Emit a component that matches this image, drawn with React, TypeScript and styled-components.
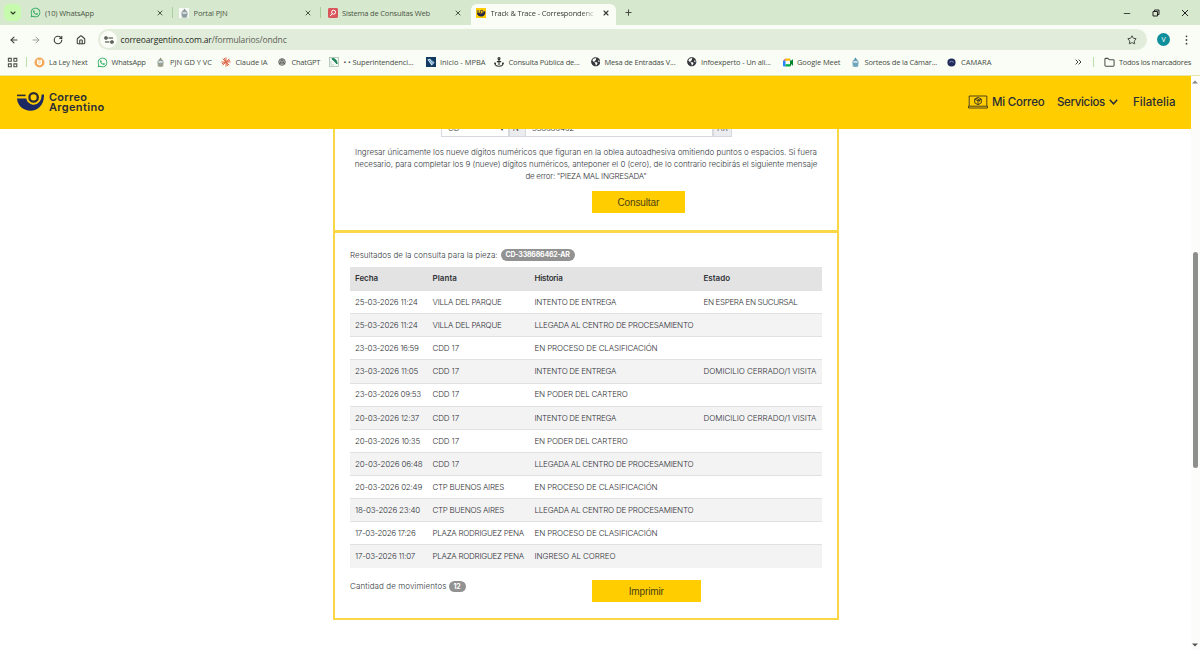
import React from 'react';
import styled, { createGlobalStyle } from 'styled-components';
import { ArrowLeft, ArrowRight, ChevronDown, Folder, Home, Plus, RotateCw, Star, X } from 'lucide-react';
import { FaWhatsapp, FaGlobeAmericas } from 'react-icons/fa';

const UI = '"Open Sans", "Noto Sans", sans-serif';
const PAGE = '"Inter", "Liberation Sans", sans-serif';
const YELLOW = '#ffcd00';
const LINE = '#f9d745';

const GlobalStyle = createGlobalStyle`
  * { box-sizing: border-box; }
  body { margin: 0; background: #fff; overflow: hidden; }
  svg { display: block; flex: none; }
`;

const Window = styled.div`
  width: 1200px;
  height: 650px;
  display: flex;
  flex-direction: column;
  overflow: hidden;
  font-family: ${UI};
  color: #474c45;
`;

const Label = styled.span<{ $ls?: number }>`
  letter-spacing: ${p => p.$ls ?? -0.15}px;
  white-space: nowrap;
`;

/* ---------- Tab strip ---------- */

const TabStrip = styled.div`
  height: 25px;
  flex: none;
  display: flex;
  align-items: center;
  background: #d6e8cd;
  padding: 0 11px 0 4px;
  font-size: 7.5px;
`;

const TabSearch = styled.div`
  width: 17px;
  height: 17px;
  margin-right: 4px;
  display: flex;
  align-items: center;
  justify-content: center;
  border-radius: 5px;
  background: #c6fbae;
  color: #2b3a26;
`;

const Tab = styled.div<{ $w: number; $start?: number; $active?: boolean; $divider?: boolean }>`
  position: relative;
  width: ${p => p.$w}px;
  height: ${p => (p.$active ? 21 : 17)}px;
  align-self: ${p => (p.$active ? 'flex-end' : 'center')};
  display: flex;
  align-items: center;
  gap: 4.5px;
  padding: 0 ${p => (p.$active ? 6 : 9)}px ${p => (p.$active ? 3 : 0)}px ${p => p.$start ?? 5}px;
  border-radius: 6px 6px 0 0;
  background: ${p => (p.$active ? '#fafdf6' : 'transparent')};
  color: ${p => (p.$active ? '#363b34' : '#4c5647')};

  &::after {
    content: '';
    display: ${p => (p.$divider ? 'block' : 'none')};
    position: absolute;
    right: 0;
    top: 3px;
    width: 1px;
    height: 11px;
    background: #a9cf9b;
  }
`;

const TabTitle = styled.div<{ $fade?: boolean }>`
  flex: 1;
  min-width: 0;
  overflow: hidden;
  line-height: 12px;
  mask-image: ${p => (p.$fade ? 'linear-gradient(90deg, #000 84%, transparent 100%)' : 'none')};
`;

const NewTab = styled.div`
  margin-left: 8px;
  color: #454d41;
`;

const WindowButtons = styled.div`
  margin-left: auto;
  display: flex;
  align-items: center;
  gap: 21px;
`;

/* ---------- Address bar ---------- */

const Toolbar = styled.div`
  height: 28px;
  flex: none;
  display: flex;
  align-items: center;
  padding: 1px 9px 0 9px;
  background: #fafdf6;
  color: #3f443d;
`;

const NavButtons = styled.div`
  width: 89px;
  display: flex;
  gap: 12.2px;
`;

const AddressField = styled.div`
  width: 1049px;
  height: 21px;
  display: flex;
  align-items: center;
  padding: 0 10px 0 2px;
  border-radius: 11px;
  background: #e2ecdb;
  font-size: 8.5px;
`;

const SiteInfo = styled.div`
  width: 17px;
  height: 17px;
  margin-right: 3.5px;
  display: flex;
  align-items: center;
  justify-content: center;
  border-radius: 50%;
  background: #fafdf6;
`;

const Url = styled.div`
  flex: 1;
  color: #5b6257;
  b { font-weight: 400; color: #262b24; }
`;

const Avatar = styled.div`
  width: 13px;
  height: 13px;
  margin: 0 15px 0 10px;
  display: flex;
  align-items: center;
  justify-content: center;
  border-radius: 50%;
  background: #0f8f9c;
  color: #fff;
  font-size: 7px;
`;

/* ---------- Bookmarks ---------- */

const BookmarkBar = styled.div`
  height: 23px;
  flex: none;
  display: flex;
  align-items: center;
  padding: 0 9px 4px 7px;
  border-bottom: 1px solid #e9e6a8;
  background: #fafdf6;
  font-size: 7.5px;
`;

const AppsButton = styled.div`
  width: 20px;
  display: flex;
`;

const Divider = styled.div<{ $before?: number; $after: number }>`
  width: 1px;
  height: 10px;
  margin: 0 ${p => p.$after}px 0 ${p => p.$before ?? 0}px;
  background: #b9dfa9;
`;

const Bookmark = styled.div<{ $w: number }>`
  width: ${p => p.$w}px;
  flex: none;
  display: flex;
  align-items: center;
  gap: 4px;
  line-height: 12px;
`;

const IconBox = styled.div`
  width: 10px;
  height: 10px;
  flex: none;
  display: flex;
  align-items: center;
  justify-content: center;
`;

const AllBookmarks = styled.div`
  display: flex;
  align-items: center;
  gap: 4px;
`;

/* ---------- Web page ---------- */

const Viewport = styled.div`
  flex: 1;
  min-height: 0;
  display: flex;
  background: #fff;
`;

const Page = styled.div`
  width: 1190.5px;
  display: flex;
  flex-direction: column;
  font-family: ${PAGE};
`;

const SiteHeader = styled.header`
  height: 52.5px;
  flex: none;
  display: flex;
  align-items: center;
  padding: 0 15px 0 17px;
  background: ${YELLOW};
  color: #2a2c35;
`;

const Brand = styled.div`
  display: flex;
  align-items: center;
  gap: 5px;
  padding-bottom: 1px;
  font: 600 11px/10.2px ${PAGE};
`;

const BrandName = styled.div`
  display: flex;
  flex-direction: column;
`;

const SiteNav = styled.nav`
  margin-left: auto;
  display: flex;
  align-items: center;
  font: 500 11.5px/14px ${PAGE};
`;

const NavItem = styled.div<{ $gap?: number }>`
  display: flex;
  align-items: center;
  gap: 4px;
  margin-left: ${p => p.$gap ?? 0}px;
`;

const Content = styled.main`
  flex: 1;
  min-height: 0;
  overflow: hidden;
  padding-left: 333px;
  font: 300 8px/12.2px ${PAGE};
  color: #33363a;
`;

const FormCard = styled.section`
  display: flow-root;
  width: 506px;
  height: 103px;
  border: solid ${LINE};
  border-width: 0 2px 2px;
`;

const PieceInput = styled.div`
  display: flex;
  width: 291px;
  height: 22px;
  margin: -14px 0 0 106px;
`;

const Field = styled.div<{ $w: number; $addon?: boolean }>`
  width: ${p => p.$w}px;
  display: flex;
  align-items: center;
  justify-content: ${p => (p.$addon ? 'center' : 'space-between')};
  padding: ${p => (p.$addon ? '5px 0 0' : '5px 4px 0 6px')};
  border: 1px solid #d5d8dc;
  border-left-width: ${p => (p.$addon ? 1 : 0)}px;
  background: ${p => (p.$addon ? '#eaecef' : '#fff')};
  &:first-child { border-left-width: 1px; }
`;

const Help = styled.div`
  margin-top: 9.3px;
  display: flex;
  flex-direction: column;
  align-items: center;
`;

const Button = styled.button<{ $w: number; $left: number; $top: number }>`
  display: block;
  width: ${p => p.$w}px;
  height: 22px;
  margin: ${p => p.$top}px 0 0 ${p => p.$left}px;
  padding: 0;
  border: 0;
  background: ${YELLOW};
  color: #4b4212;
  font: 10px/23px "Liberation Sans", Arial, sans-serif;
  letter-spacing: -0.12px;
`;

const ResultCard = styled.section`
  width: 506px;
  height: 388px;
  padding: 16.5px 15px 0 15px;
  border: solid ${LINE};
  border-width: 1px 2px 2px;
`;

const Caption = styled.div`
  display: flex;
  align-items: center;
  gap: 3px;
  height: 12px;
`;

const Badge = styled.span<{ $w: number }>`
  width: ${p => p.$w}px;
  height: 11.5px;
  border-radius: 6px;
  background: #929292;
  color: #fff;
  font-weight: 700;
  font-size: 7px;
  line-height: 12px;
  text-align: center;
  letter-spacing: -0.2px;
`;

const Table = styled.div`
  width: 472px;
  margin-top: 6px;
`;

const Row = styled.div<{ $head?: boolean; $shade?: boolean }>`
  display: grid;
  grid-template-columns: 77.5px 102px 169px 1fr;
  align-items: center;
  height: ${p => (p.$head ? 23 : 23.13)}px;
  padding-left: 5px;
  border-top: ${p => (p.$head ? 'none' : '1px solid #dfe1e3')};
  background: ${p => (p.$head ? '#e3e3e3' : p.$shade ? '#f3f3f4' : '#fff')};
  font-weight: ${p => (p.$head ? 600 : 300)};
  color: ${p => (p.$head ? '#303236' : '#2f3236')};
`;

const Footer = styled.div`
  display: flex;
  align-items: flex-start;
`;

const FooterCount = styled(Caption)`
  width: 242px;
  margin-top: 13px;
  gap: 2px;
`;

const Scrollbar = styled.div`
  width: 9.5px;
  display: flex;
  flex-direction: column;
  align-items: center;
  justify-content: space-between;
  padding: 4px 0 3px;
  background: #fcfdfb;
`;

const Thumb = styled.div`
  width: 5px;
  height: 216px;
  margin-bottom: 7px;
  border-radius: 3px;
  background: #8c8f8c;
`;

/* ---------- Icons ---------- */

const BrandMark = () => (
  <svg width="27" height="20" viewBox="0 0 27 20">
    <path d="M0 6.6H9.3A7.5 7.5 0 0 0 22.5 9.8Q24.7 7 24.7 2.4H27C27.4 12.4 21.4 18.7 13.5 18.7 6.6 18.7 .6 14.2 0 6.6Z" fill="#1c2963" />
    <path d="M0 3.4H8.6" stroke="#2b2b35" strokeWidth="1.6" />
    <circle cx="16.6" cy="5.4" r="4.2" fill="none" stroke="#2b2b35" strokeWidth="2.3" />
  </svg>
);

const Whatsapp = () => <FaWhatsapp size={11} color="#25a85a" />;

const Crest = ({ top = '#8f9a94', body = '#74858b' }: { top?: string; body?: string }) => (
  <svg width="9" height="10" viewBox="0 0 9 10">
    <path d="M3 2.8 4.5.6 6 2.8Z" fill={top} />
    <ellipse cx="4.5" cy="5.8" rx="3.1" ry="3.5" fill={body} opacity=".8" />
    <path d="M2.4 4.2h4.2v1.5H2.4Z" fill="#e4edf2" />
    <path d="M1.6 8.8Q4.5 10.4 7.4 8.8" fill="none" stroke={top} strokeWidth=".8" />
  </svg>
);

const CrestTile = styled.div`
  width: 10px;
  height: 10px;
  display: flex;
  justify-content: center;
  background: #f7faf6;
`;

const PdfSearch = () => (
  <svg width="10" height="10" viewBox="0 0 10 10">
    <rect width="10" height="10" rx="1.4" fill="#d9565a" />
    <circle cx="5.6" cy="4.2" r="2" fill="none" stroke="#fff" />
    <path d="M4.2 5.7 2.2 8" stroke="#fff" />
  </svg>
);

const TrackFavicon = () => (
  <svg width="10" height="10" viewBox="0 0 10 10">
    <rect width="10" height="10" fill={YELLOW} />
    <path d="M.8 4.6H3A3 3 0 0 0 8.2 3.2H9.4C9.4 7 7.6 8.6 5.2 8.6 2.8 8.6 1 7 .8 4.6Z" fill="#25264a" />
    <path d="M.8 3H3" stroke="#25264a" strokeWidth=".9" />
    <circle cx="5.7" cy="3.9" r="1.5" fill="none" stroke="#25264a" strokeWidth=".9" />
  </svg>
);

const LaLey = () => (
  <svg width="11" height="11" viewBox="0 0 11 11">
    <circle cx="5.5" cy="5.5" r="5" fill="#f3a95c" />
    <path d="M3.6 2.8v3.4a2 2 0 0 0 3.8 0V2.8" fill="#fbe1c0" stroke="#fff" strokeWidth="1.2" />
  </svg>
);

const Burst = () => (
  <svg width="10" height="10" viewBox="0 0 10 10" stroke="#de6a4d" strokeWidth="1">
    <path d="M5 .4V9.6M.4 5H9.6M1.7 1.7 8.3 8.3M8.3 1.7 1.7 8.3M3.2.9 6.8 9.1M.9 6.8 9.1 3.2" />
  </svg>
);

const Knot = () => (
  <svg width="8" height="8" viewBox="0 0 10 10" fill="none" stroke="#4a4e49" strokeWidth="1.1">
    <circle cx="5" cy="5" r="4.1" />
    <path d="M5 2.4 7.3 3.7V6.3L5 7.6 2.7 6.3V3.7ZM5 .9V5L8.6 7M5 5 1.4 7" />
  </svg>
);

const GreenSheet = () => (
  <svg width="10" height="10" viewBox="0 0 10 10">
    <rect x=".4" y=".4" width="9.2" height="9.2" fill="#f4f8f4" stroke="#9fb8a6" strokeWidth=".7" />
    <path d="M2.8 1.6C6 1.4 8.2 3.4 8 7 6.6 5.2 5 3.6 2.8 1.6Z" fill="#148250" stroke="#148250" strokeWidth="1" />
    <path d="M2 4V8H5" fill="none" stroke="#b9cfc0" strokeWidth=".8" />
  </svg>
);

const BlueDiamond = () => (
  <svg width="10" height="10" viewBox="0 0 10 10">
    <rect width="10" height="10" fill="#12395f" />
    <path d="M1.4 2.6 4 1.8 8.6 5.6 5.6 8.6Z" fill="#dcecf7" />
    <path d="M3 3 6.6 7M4.6 2.4 7.6 6" stroke="#2b71a8" strokeWidth=".8" />
  </svg>
);

const Scales = () => (
  <svg width="10" height="10" viewBox="0 0 10 10" fill="none" stroke="#2e332d" strokeWidth="1.1">
    <circle cx="5" cy="1.6" r="1" />
    <path d="M5 2.6V8M2.8 4.6H7.2M.8 5.4C.8 8 2.6 9.2 5 9.2S9.2 8 9.2 5.4M.2 6.4H2M8 6.4H9.8" />
  </svg>
);

const Earth = () => <FaGlobeAmericas size={9.5} color="#33373b" />;

const Meet = () => (
  <svg width="10" height="9" viewBox="0 0 10 9">
    <path d="M2.5.5H7V2.8H2.5Z" fill="#fbbc04" />
    <path d="M0 2.8 2.5.5V2.8Z" fill="#ea4335" />
    <path d="M0 2.8H2.5V8.5H1A1 1 0 0 1 0 7.5Z" fill="#2684fc" />
    <path d="M2.5 6.2H7V8.5H2.5Z" fill="#00ac47" />
    <path d="M7 .5V8.5L8 7.5V6L10 7.8V1.2L7.6 3Z" fill="#00832d" />
  </svg>
);

const Orb = () => (
  <svg width="9" height="9" viewBox="0 0 9 9">
    <circle cx="4.5" cy="4.5" r="4.1" fill="#222c5c" />
    <path d="M2.2 4.2Q4.5 2.4 6.8 4.2" fill="none" stroke="#8a95c4" strokeWidth=".9" />
  </svg>
);

const Tune = () => (
  <svg width="10" height="8" viewBox="0 0 10 8" fill="none" stroke="#32382f" strokeWidth="1.2">
    <circle cx="2" cy="2" r="1.2" />
    <path d="M4.4 2H9M1 6H5.4" />
    <circle cx="8" cy="6" r="1.2" />
  </svg>
);

const AppsGrid = () => (
  <svg width="11" height="11" viewBox="0 0 11 11" fill="none" stroke="#4d534b" strokeWidth="1.1">
    <path d="M1.4 1.4H4.3V4.3H1.4ZM6.9 1.4H9.8V4.3H6.9ZM1.4 6.9H4.3V9.8H1.4ZM6.9 6.9H9.8V9.8H6.9Z" />
  </svg>
);

const LaptopBox = () => (
  <svg width="20" height="14" viewBox="0 0 20 14" fill="none" stroke="#3a3620" strokeWidth=".9">
    <path d="M1.2 11V1H18.8V11M.5 11.2H19.5V13H.5Z" />
    <path d="M10 2.4 13.3 4.1V7.9L10 9.7 6.7 7.9V4.1ZM6.7 4.1 10 5.9 13.3 4.1M10 5.9V9.7M8.2 3.3 11.6 5V6.6" />
  </svg>
);

/* ---------- Data ---------- */

const bookmarks: { icon: React.ReactNode; text: string; w: number; ls: number }[] = [
  { icon: <LaLey />, text: 'La Ley Next', w: 62.5, ls: -0.17 },
  { icon: <Whatsapp />, text: 'WhatsApp', w: 58.5, ls: -0.2 },
  { icon: <Crest top="#8d8a5c" body="#7d8a80" />, text: 'PJN GD Y VC', w: 65.5, ls: -0.03 },
  { icon: <Burst />, text: 'Claude IA', w: 56, ls: -0.11 },
  { icon: <Knot />, text: 'ChatGPT', w: 52, ls: -0.22 },
  { icon: <GreenSheet />, text: '• • Superintendenci...', w: 96.5, ls: -0.13 },
  { icon: <BlueDiamond />, text: 'Inicio - MPBA', w: 68.5, ls: -0.02 },
  { icon: <Scales />, text: 'Consulta Pública de...', w: 96, ls: -0.16 },
  { icon: <Earth />, text: 'Mesa de Entradas V...', w: 96.5, ls: -0.18 },
  { icon: <Earth />, text: 'Infoexperto - Un ali...', w: 96, ls: -0.14 },
  { icon: <Meet />, text: 'Google Meet', w: 67.5, ls: -0.09 },
  { icon: <Crest top="#3d88a8" body="#4d8fae" />, text: 'Sorteos de la Cámar...', w: 96.5, ls: -0.17 },
  { icon: <Orb />, text: 'CAMARA', w: 128, ls: 0.03 },
];

type Cell = [string, number];

const DEL_PARQUE: Cell = ['VILLA DEL PARQUE', -0.25];
const CDD: Cell = ['CDD 17', -0.12];
const CTP: Cell = ['CTP BUENOS AIRES', -0.27];
const PLAZA: Cell = ['PLAZA RODRIGUEZ PENA', -0.26];
const INTENTO: Cell = ['INTENTO DE ENTREGA', -0.3];
const LLEGADA: Cell = ['LLEGADA AL CENTRO DE PROCESAMIENTO', -0.22];
const PROCESO: Cell = ['EN PROCESO DE CLASIFICACIÓN', -0.13];
const CARTERO: Cell = ['EN PODER DEL CARTERO', -0.17];
const DOMICILIO: Cell = ['DOMICILIO CERRADO/1 VISITA', -0.05];

const movements: Cell[][] = [
  [['25-03-2026 11:24', -0.26], DEL_PARQUE, INTENTO, ['EN ESPERA EN SUCURSAL', -0.34]],
  [['25-03-2026 11:24', -0.26], DEL_PARQUE, LLEGADA],
  [['23-03-2026 16:59', -0.29], CDD, PROCESO],
  [['23-03-2026 11:05', -0.22], CDD, INTENTO, DOMICILIO],
  [['23-03-2026 09:53', -0.25], CDD, CARTERO],
  [['20-03-2026 12:37', -0.25], CDD, INTENTO, DOMICILIO],
  [['20-03-2026 10:35', -0.21], CDD, CARTERO],
  [['20-03-2026 06:48', -0.18], CDD, LLEGADA],
  [['20-03-2026 02:49', -0.21], CTP, PROCESO],
  [['18-03-2026 23:40', -0.23], CTP, LLEGADA],
  [['17-03-2026 17:26', -0.32], PLAZA, PROCESO],
  [['17-03-2026 11:07', -0.25], PLAZA, ['INGRESO AL CORREO', -0.08]],
];

const headings: Cell[] = [['Fecha', -0.07], ['Planta', 0.05], ['Historia', -0.25], ['Estado', -0.01]];

export default function App() {
  return (
    <Window>
      <GlobalStyle />
      <TabStrip>
        <TabSearch><ChevronDown size={8} strokeWidth={3.4} /></TabSearch>
        <Tab $w={148} $start={4.5} $divider>
          <Whatsapp />
          <TabTitle><Label $ls={-0.14}>(10) WhatsApp</Label></TabTitle>
          <X size={8} strokeWidth={3} />
        </Tab>
        <Tab $w={148} $start={6} $divider>
          <CrestTile><Crest /></CrestTile>
          <TabTitle><Label $ls={-0.09}>Portal PJN</Label></TabTitle>
          <X size={8} strokeWidth={3} />
        </Tab>
        <Tab $w={150} $start={6.5}>
          <PdfSearch />
          <TabTitle><Label $ls={-0.18}>Sistema de Consultas Web</Label></TabTitle>
          <X size={8} strokeWidth={3} />
        </Tab>
        <Tab $w={145} $active>
          <TrackFavicon />
          <TabTitle $fade><Label $ls={-0.16}>Track &amp; Trace - Correspondenc</Label></TabTitle>
          <X size={8} strokeWidth={3.4} />
        </Tab>
        <NewTab><Plus size={9} strokeWidth={2.8} /></NewTab>
        <WindowButtons>
          <svg width="8" height="8" viewBox="0 0 8 8" stroke="#333" strokeWidth=".9"><path d="M.8 4.5H7.2" /></svg>
          <svg width="8" height="8" viewBox="0 0 8 8" fill="none" stroke="#222" strokeWidth="1"><path d="M1 2.5H5.5V7H1ZM2.5 2.5V1H7V5.5H5.5" /></svg>
          <svg width="8" height="8" viewBox="0 0 8 8" stroke="#222" strokeWidth="1"><path d="M1 1 7 7M7 1 1 7" /></svg>
        </WindowButtons>
      </TabStrip>

      <Toolbar>
        <NavButtons>
          <ArrowLeft size={10} strokeWidth={2.6} />
          <ArrowRight size={10} strokeWidth={2.4} color="#9aa196" />
          <RotateCw size={10} strokeWidth={2.8} />
          <Home size={10} strokeWidth={2.6} />
        </NavButtons>
        <AddressField>
          <SiteInfo><Tune /></SiteInfo>
          <Url><Label $ls={-0.13}><b>correoargentino.com.ar</b>/formularios/ondnc</Label></Url>
          <Star size={10} strokeWidth={2.4} />
        </AddressField>
        <Avatar>V</Avatar>
        <svg width="3" height="10" viewBox="0 0 3 10" fill="#3f443d">
          <circle cx="1.5" cy="1.3" r=".9" /><circle cx="1.5" cy="5" r=".9" /><circle cx="1.5" cy="8.7" r=".9" />
        </svg>
      </Toolbar>

      <BookmarkBar>
        <AppsButton><AppsGrid /></AppsButton>
        <Divider $after={8.5} />
        {bookmarks.map(b => (
          <Bookmark key={b.text} $w={b.w}>
            <IconBox>{b.icon}</IconBox>
            <Label $ls={b.ls}>{b.text}</Label>
          </Bookmark>
        ))}
        <svg width="7" height="6" viewBox="0 0 7 6" fill="none" stroke="#3f443d" strokeWidth="1">
          <path d="M.6.6 3 3 .6 5.4M3.6.6 6 3 3.6 5.4" />
        </svg>
        <Divider $before={11} $after={10} />
        <AllBookmarks>
          <Folder size={11} strokeWidth={2.2} />
          <Label $ls={-0.25}>Todos los marcadores</Label>
        </AllBookmarks>
      </BookmarkBar>

      <Viewport>
        <Page>
          <SiteHeader>
            <Brand>
              <BrandMark />
              <BrandName>
                <Label $ls={0.27}>Correo</Label>
                <Label $ls={0.34}>Argentino</Label>
              </BrandName>
            </Brand>
            <SiteNav>
              <NavItem><LaptopBox /><Label $ls={-0.21}>Mi Correo</Label></NavItem>
              <NavItem $gap={12.5}>
                <Label $ls={-0.33}>Servicios</Label>
                <svg width="9" height="6" viewBox="0 0 9 6" fill="none" stroke="#2a2c35" strokeWidth="1.5"><path d="M.8.8 4.5 4.8 8.2.8" /></svg>
              </NavItem>
              <NavItem $gap={15}><Label $ls={0.06}>Filatelia</Label></NavItem>
            </SiteNav>
          </SiteHeader>

          <Content>
            <FormCard>
              <PieceInput>
                <Field $w={68}><Label>CD</Label><Label>▾</Label></Field>
                <Field $w={17} $addon>N°</Field>
                <Field $w={187}><Label $ls={-0.2}>338686462</Label></Field>
                <Field $w={19} $addon>AR</Field>
              </PieceInput>
              <Help>
                <Label $ls={-0.02}>Ingresar únicamente los nueve dígitos numéricos que figuran en la oblea autoadhesiva omitiendo puntos o espacios. Si fuera</Label>
                <Label $ls={-0.05}>necesario, para completar los 9 (nueve) dígitos numéricos, anteponer el 0 (cero), de lo contrario recibirás el siguiente mensaje</Label>
                <Label $ls={-0.28}>de error: "PIEZA MAL INGRESADA"</Label>
              </Help>
              <Button $w={92.5} $left={257} $top={9}>Consultar</Button>
            </FormCard>

            <ResultCard>
              <Caption>
                <Label $ls={0.02}>Resultados de la consulta para la pieza:</Label>
                <Badge $w={74}>CD-338686462-AR</Badge>
              </Caption>
              <Table>
                <Row $head>{headings.map(([t, ls]) => <Label key={t} $ls={ls}>{t}</Label>)}</Row>
                {movements.map((cells, i) => (
                  <Row key={i} $shade={i % 2 === 1}>
                    {cells.map(([t, ls]) => <Label key={t} $ls={ls}>{t}</Label>)}
                  </Row>
                ))}
              </Table>
              <Footer>
                <FooterCount>
                  <Label $ls={0.09}>Cantidad de movimientos</Label>
                  <Badge $w={17}>12</Badge>
                </FooterCount>
                <Button $w={108.5} $left={0} $top={12.5}>Imprimir</Button>
              </Footer>
            </ResultCard>
          </Content>
        </Page>
        <Scrollbar>
          <svg width="6" height="4" viewBox="0 0 6 4" fill="#858885"><path d="M0 3.6 3 .4 6 3.6Z" /></svg>
          <Thumb />
          <svg width="6" height="4" viewBox="0 0 6 4" fill="#555"><path d="M0 .4 3 3.6 6 .4Z" /></svg>
        </Scrollbar>
      </Viewport>
    </Window>
  );
}
